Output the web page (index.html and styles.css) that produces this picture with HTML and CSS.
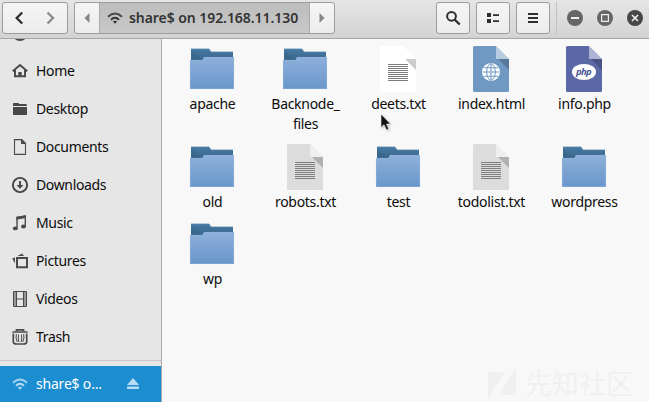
FILE: index.html
```html
<!DOCTYPE html>
<html lang="en">
<head>
<meta charset="utf-8">
<title>Files</title>
<link rel="stylesheet" href="styles.css">
</head>
<body>
<svg class="defs" width="0" height="0" aria-hidden="true">
  <defs>
    <linearGradient id="front" x1="0" y1="0" x2="0" y2="1"><stop offset="0" stop-color="#8fb0da"/><stop offset="1" stop-color="#6896ca"/></linearGradient>
    <linearGradient id="back" x1="0" y1="0" x2="0" y2="1"><stop offset="0" stop-color="#477aa5"/><stop offset="1" stop-color="#386387"/></linearGradient>
    <symbol id="folder" viewBox="0 0 48 48">
      <path d="M3 4h18l2 3h22v10H3z" fill="url(#back)"/>
      <path d="M3 4h18l2 3h22" fill="none" stroke="#5685a9" stroke-width=".8"/>
      <path d="M3 5l10 9H3z" fill="#376687" opacity=".5"/>
      <path d="M2 15h12.500l1.500-3h30v32H2z" fill="url(#front)"/>
      <path d="M2 15.400h12.800l1.500-3h29.300V43.600H2.400V15" fill="none" stroke="#91b6df" stroke-width=".8" opacity=".65"/>
    </symbol>
    <symbol id="sheet" viewBox="0 0 48 48">
      <path d="M7.500 1H29l13 13v31.500a1.500 1.500 0 0 1-1.500 1.500h-33A1.500 1.500 0 0 1 6 45.500v-43A1.500 1.500 0 0 1 7.500 1z" fill="currentColor"/>
      <path class="fold-shade" d="M31 14h11v11z"/>
      <path class="fold" d="M29 1l13 13H29z"/>
    </symbol>
    <symbol id="lines" viewBox="0 0 48 48">
      <path d="M14 19.500h20M14 21.500h20M14 23.500h20M14 25.500h20M14 27.500h20M14 29.500h20M14 31.500h20M14 33.500h20M14 35.500h20" stroke="#7e7e7e" fill="none"/>
    </symbol>
    <symbol id="wifi" viewBox="0 0 16 16">
      <g fill="none" stroke="currentColor" stroke-width="1.900"><path d="M1 6.700q7-6.200 14 0" opacity=".85"/><path d="M4 9.700q4-3.700 8 0"/></g>
      <path d="M5.900 11.600q2.100-1.500 4.200 0L8 13.800z" fill="currentColor"/>
    </symbol>
  </defs>
</svg>
<header class="bar">
  <div class="group nav">
    <button class="btn" aria-label="Back"><svg width="16" height="16" viewBox="0 0 16 16"><path d="M11.200 2.500L5.700 8l5.500 5.500" fill="none" stroke="#2c2c2c" stroke-width="2.300"/></svg></button>
    <button class="btn" aria-label="Forward"><svg width="16" height="16" viewBox="0 0 16 16"><path d="M4.500 2.500L10 8l-5.500 5.500" fill="none" stroke="#8b8b8b" stroke-width="2.300"/></svg></button>
  </div>
  <div class="group path">
    <button class="step" aria-label="Scroll left"><svg width="6" height="10" viewBox="0 0 6 10"><path d="M5.500 0v10L.5 5z" fill="#858585"/></svg></button>
    <button class="crumb"><svg width="16" height="16"><use href="#wifi"/></svg><span>share$ on 192.168.11.130</span></button>
    <button class="step" aria-label="Scroll right"><svg width="6" height="10" viewBox="0 0 6 10"><path d="M.5 0v10l5-5z" fill="#858585"/></svg></button>
  </div>
  <div class="tools">
    <button class="group tool" aria-label="Search"><svg width="16" height="16" viewBox="0 0 16 16"><circle cx="6.500" cy="6.300" r="4.400" fill="none" stroke="#2e2e2e" stroke-width="2"/><path d="M9.700 9.700l5 4.800" stroke="#2e2e2e" stroke-width="2.300"/></svg></button>
    <button class="group tool" aria-label="View"><svg width="16" height="16" viewBox="0 0 16 16"><path d="M2 3h4v4H2zM2 9h4v4H2zM8 4.200h6v1.800H8zM8 10.200h6V12H8z" fill="#2e2e2e"/></svg></button>
    <button class="group tool" aria-label="Menu"><svg width="16" height="16" viewBox="0 0 16 16"><path d="M3 3h10v2H3zM3 7h10v2H3zM3 11h10v2H3z" fill="#2e2e2e"/></svg></button>
  </div>
  <div class="window">
    <svg width="16" height="16" viewBox="0 0 16 16"><circle cx="8" cy="8" r="8" fill="#666"/><path d="M4 7h8v2H4z" fill="#eee"/></svg>
    <svg width="16" height="16" viewBox="0 0 16 16"><circle cx="8" cy="8" r="8" fill="#666"/><path d="M4.600 4.600h6.800v6.800H4.600z" fill="none" stroke="#eee" stroke-width="1.200"/></svg>
    <svg width="16" height="16" viewBox="0 0 16 16"><circle cx="8" cy="8" r="8" fill="#474747"/><path d="M5 5l6 6M11 5l-6 6" stroke="#f2f2f2" stroke-width="1.600"/></svg>
  </div>
</header>
<main class="body">
  <nav class="side">
    <div class="row recent"><svg width="16" height="16" viewBox="0 0 16 16"><circle cx="8" cy="7" r="7" fill="none" stroke="#4a4a4a" stroke-width="2"/></svg></div>
    <div class="row"><svg width="16" height="16" viewBox="0 0 16 16"><path d="M.7 8.200L8 2l7.300 6.200" fill="none" stroke="#4a4a4a" stroke-width="2"/><path d="M3 7v6.200h10V7" fill="none" stroke="#4a4a4a" stroke-width="2"/><path d="M6.300 9h3.400v5H6.300z" fill="#4a4a4a"/></svg><span>Home</span></div>
    <div class="row"><svg width="16" height="16" viewBox="0 0 16 16"><path d="M1 2.600q0-.6.600-.6h4.800l1 1H14q.8 0 .8.800v1.100H1zM1 6h14v7.200q0 .8-.8.800H1.800Q1 14 1 13.200z" fill="#484848"/></svg><span>Desktop</span></div>
    <div class="row"><svg width="16" height="16" viewBox="0 0 16 16"><path d="M2.500.6h7.300l3.700 3.700v11.100h-11z" fill="none" stroke="#4a4a4a" stroke-width="1.100"/><path d="M9 0v5h5z" fill="#4a4a4a"/></svg><span>Documents</span></div>
    <div class="row"><svg width="16" height="16" viewBox="0 0 16 16"><circle cx="8" cy="8" r="7.100" fill="none" stroke="#4a4a4a" stroke-width="1.900"/><path d="M7 4h2v4h2.500L8 11.700 4.500 8H7z" fill="#4a4a4a"/></svg><span>Downloads</span></div>
    <div class="row"><svg width="16" height="16" viewBox="0 0 16 16"><path d="M5 13.500V2.500l8.300-1.500V11" fill="none" stroke="#4a4a4a" stroke-width="1.400"/><path d="M4.300 1.800L14 .2v2.900L4.300 4.700z" fill="#4a4a4a"/><ellipse cx="3.300" cy="13.400" rx="2.500" ry="1.900" fill="#4a4a4a"/><ellipse cx="11.500" cy="11.500" rx="2.500" ry="1.900" fill="#4a4a4a"/></svg><span>Music</span></div>
    <div class="row"><svg width="16" height="16" viewBox="0 0 16 16"><path d="M5 5h10v9.200H5z" fill="none" stroke="#4a4a4a" stroke-width="2"/><path d="M5.500 3L10 .4 12 3zM3 4.400v6L.2 5.300z" fill="#4a4a4a"/></svg><span>Pictures</span></div>
    <div class="row"><svg width="16" height="16" viewBox="0 0 16 16"><path d="M1.500.5h13v15h-13zM4.500.5v15M11.500.5v15M4.500 8h7" fill="none" stroke="#4a4a4a"/><path d="M3 1.500v14M13 1.500v14" stroke="#4a4a4a" stroke-width="2" stroke-dasharray="1 1"/></svg><span>Videos</span></div>
    <div class="row"><svg width="16" height="16" viewBox="0 0 16 16"><path d="M4.500 2V.8h7V2M.5 3h15M1.300 4.500v8q0 2.500 3 2.500h7.400q3 0 3-2.500v-8" fill="none" stroke="#4a4a4a" stroke-width="1.700"/><path d="M4.300 5q-1 4 1 8M6.500 5.500q-.6 3.500.3 7.500M9.500 5.500q.6 3.500-.3 7.500M11.700 5q1 4-1 8" fill="none" stroke="#4a4a4a" stroke-width="1"/></svg><span>Trash</span></div>
    <div class="rule"></div>
    <div class="row active"><svg width="16" height="16"><use href="#wifi"/></svg><span>share$ o...</span><svg class="eject" width="12" height="12" viewBox="0 0 12 12"><path d="M6 0l6 7H0zM0 8.500h12v2.500H0z" fill="currentColor"/></svg></div>
  </nav>
  <section class="files">
    <div class="item"><svg class="icon"><use href="#folder"/></svg><span>apache</span></div>
    <div class="item"><svg class="icon"><use href="#folder"/></svg><span>Backnode_<br>files</span></div>
    <div class="item"><svg class="icon white"><use href="#sheet"/><use href="#lines"/></svg><span>deets.txt</span>
      <svg class="cursor" width="14" height="20" viewBox="0 0 14 20"><path d="M2 1v13.500l3-2.800L7.500 17l2.300-1-2.300-5h4z" fill="#111" stroke="#fff" stroke-width=".6"/></svg></div>
    <div class="item"><svg class="icon html" viewBox="0 0 48 48"><use href="#sheet"/><circle cx="24" cy="27" r="9" fill="#fff"/><g fill="none" stroke="#6f98c3" stroke-width="1"><ellipse cx="24" cy="27" rx="4.300" ry="8.200"/><path d="M24 18.500v17M15.500 27h17M17 22.700h14M17 31.300h14"/></g></svg><span>index.html</span></div>
    <div class="item"><svg class="icon php" viewBox="0 0 48 48"><use href="#sheet"/><ellipse cx="24" cy="27" rx="12" ry="8" fill="#fff"/><text x="23.500" y="30" text-anchor="middle" class="php-mark">php</text></svg><span>info.php</span></div>
    <div class="item"><svg class="icon"><use href="#folder"/></svg><span>old</span></div>
    <div class="item"><svg class="icon"><use href="#sheet"/><use href="#lines"/></svg><span>robots.txt</span></div>
    <div class="item"><svg class="icon"><use href="#folder"/></svg><span>test</span></div>
    <div class="item"><svg class="icon"><use href="#sheet"/><use href="#lines"/></svg><span>todolist.txt</span></div>
    <div class="item"><svg class="icon"><use href="#folder"/></svg><span>wordpress</span></div>
    <div class="item"><svg class="icon"><use href="#folder"/></svg><span>wp</span></div>
    <div class="mark"><svg width="28" height="34" viewBox="0 0 28 34"><path d="M0 6h18L0 34zM28 0v29H11z" fill="currentColor"/><path d="M17 6h4L6 29H2z" fill="#f8f8f8"/></svg><span>先知社区</span></div>
  </section>
</main>
</body>
</html>
```
FILE: styles.css
```css
* { box-sizing: border-box; }
body {
  margin: 0;
  width: 649px;
  height: 402px;
  overflow: hidden;
  display: flex;
  flex-direction: column;
  background: #f8f8f8;
  color: #0c0c0c;
  font: 14px/20px "Noto Sans", "Open Sans", sans-serif;
}
.defs { position: absolute; }
svg { display: block; flex: none; }
button { padding: 0; border: 0; background: none; font: inherit; color: inherit; display: flex; align-items: center; justify-content: center; }

.bar {
  height: 39px;
  flex: none;
  display: flex;
  align-items: flex-start;
  padding: 2px 6px 0 2px;
  background: linear-gradient(#e5e5e5, #d3d3d3);
  border-bottom: 1px solid #a6a6a6;
}
.group {
  height: 32px;
  border: 1px solid #9d9d9d;
  border-radius: 3px;
  background: linear-gradient(#f5f5f5, #ececec);
  display: flex;
  overflow: hidden;
}
.nav { width: 66px; }
.nav .btn { width: 32px; }
.path { width: 261px; margin-left: 6px; }
.step { width: 24px; flex: none; }
.crumb {
  width: 211px;
  justify-content: flex-start;
  padding-left: 7px;
  background: linear-gradient(#bdbdbd, #c8c8c8);
  color: #333;
  font-weight: 600;
  letter-spacing: -.06px;
  gap: 6px;
  border-left: 1px solid #aaa;
  border-right: 1px solid #aaa;
  white-space: nowrap;
}
.tools { display: flex; gap: 6px; margin-left: 101px; }
.tool { width: 34px; }
.window {
  display: flex;
  gap: 14px;
  height: 32px;
  margin-left: 6px;
  padding-left: 10px;
  align-items: center;
  border-left: 1px solid #c0c0c0;
}

.body { flex: 1; display: flex; min-height: 0; }
.side {
  width: 162px;
  flex: none;
  background: #e6e6e6;
  border-right: 1px solid #a9a9a9;
  overflow: hidden;
}
.row {
  height: 38px;
  display: flex;
  align-items: center;
  padding-left: 12px;
  gap: 8px;
  letter-spacing: -.35px;
}
.recent { height: 13px; align-items: flex-start; }
.recent svg { margin-top: -13px; }
.rule { height: 1px; margin: 4px 0 5px; background: #c8c8c8; }
.active { height: 36px; background: #1b8dd0; color: #fff; letter-spacing: -.2px; }
.active svg { color: #b9ddf2; }
.active .eject { margin-left: auto; margin-right: 22px; }

.files {
  position: relative;
  flex: 1;
  padding: 6px 0 0 4px;
  display: grid;
  grid-template-columns: repeat(5, 93px);
  grid-template-rows: 98px 77px 69px;
}
.item {
  position: relative;
  display: flex;
  flex-direction: column;
  align-items: center;
  text-align: center;
  letter-spacing: -.3px;
}
.icon { width: 48px; height: 48px; margin: 0 1px 1px 0; color: #dcdcdc; }
.fold { fill: #fff; opacity: .5; }
.fold-shade { fill: #000; opacity: .2; }
.white { color: #fff; }
.white .fold-shade { opacity: .12; }
.html { color: #6f98c3; }
.php { color: #5b68a6; }
.php-mark { font: italic bold 9.5px "Noto Sans", sans-serif; fill: #4b5795; letter-spacing: -.6px; }
.cursor { position: absolute; left: 27px; top: 68px; filter: drop-shadow(1px 1px 1px #8888); }
.mark {
  position: absolute;
  right: 16px;
  bottom: 2px;
  display: flex;
  align-items: center;
  gap: 9px;
  color: #f0f0f0;
  font: 27px/32px "Noto Sans CJK SC", sans-serif;
}
```
